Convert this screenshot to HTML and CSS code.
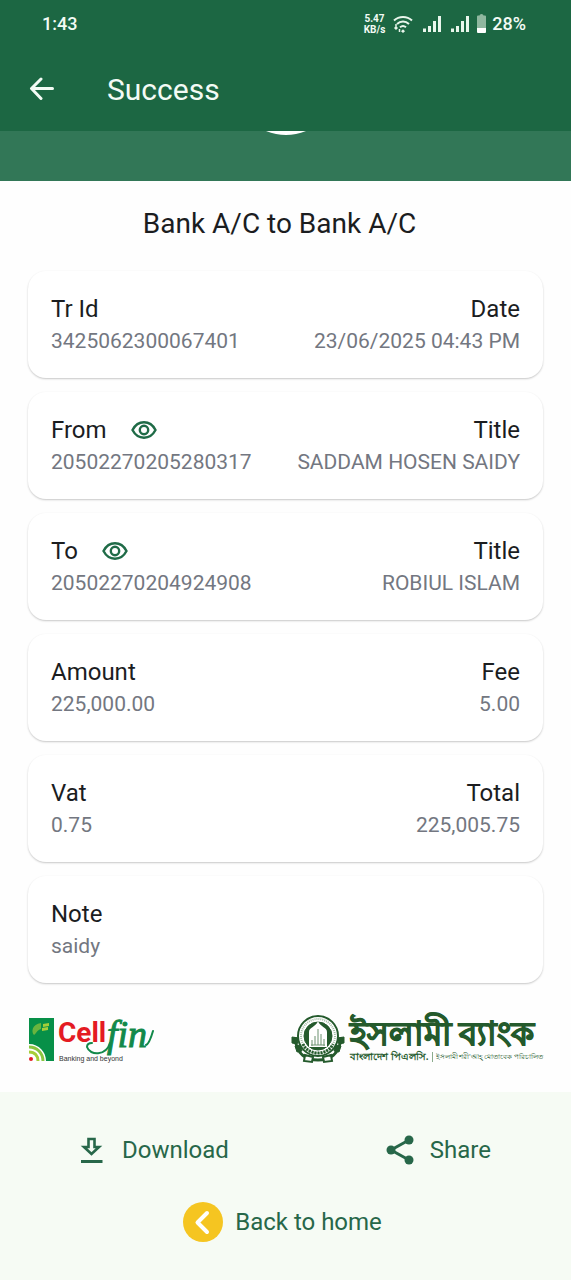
FILE: index.html
```html
<!DOCTYPE html>
<html lang="en">
<head>
  <meta charset="UTF-8">
  <meta name="viewport" content="width=device-width, initial-scale=1.0">
  <title>Success</title>
  <link rel="stylesheet" href="styles.css">
</head>
<body>
  <header class="top">
    <div class="status">
      <span class="time">1:43</span>
      <span class="speed">5.47<br>KB/s</span>
      <svg class="wifi" width="20" height="18" viewBox="0 0 20 18" fill="none" stroke="#e9f6ec" stroke-width="2">
        <path d="M1 5.500C6 .7 14 .7 19 5.500M4 9c3.500-3.200 8.500-3.200 12 0M7 12.200c1.800-1.500 4.200-1.500 6 0"/>
        <path d="M10 14.200l2 2-2 1.800-2-1.800z" fill="#e9f6ec" stroke="none"/>
        <path d="M3 9v5M1.500 12.500L3 14l1.500-1.500M6.500 17v-3" stroke-width="1.500"/>
      </svg>
      <svg class="signal" width="18" height="16" viewBox="0 0 18 16" fill="#e9f6ec">
        <path d="M0 12.500h3V16H0zM5 10h3v6H5zM10 5h3v11h-3zM15 0h3v16h-3z"/>
      </svg>
      <svg class="signal" width="18" height="16" viewBox="0 0 18 16" fill="#e9f6ec">
        <path d="M0 12.500h3V16H0zM5 10h3v6H5zM10 5h3v11h-3zM15 0h3v16h-3z"/>
      </svg>
      <svg class="battery" width="9" height="19" viewBox="0 0 9 19">
        <path d="M2.500 1.500Q2.500 0 4.500 0t2 1.500H8q1 0 1 1V14H0V2.500q0-1 1-1z" fill="#8fb79f"/>
        <path d="M0 14h9v4q0 1-1 1H1q-1 0-1-1z" fill="#fff"/>
      </svg>
      <span class="percent">28%</span>
    </div>
    <div class="appbar">
      <button class="back" aria-label="Back">
        <svg width="26" height="24" viewBox="0 0 26 24" fill="none" stroke="#f3fbf5" stroke-width="3" stroke-linecap="round" stroke-linejoin="round">
          <path d="M12 2L2.500 11.500l9.500 10M3 11.500h20.500"/>
        </svg>
      </button>
      <h1>Success</h1>
    </div>
  </header>

  <div class="band">
    <svg width="44" height="5" viewBox="0 0 44 5"><path d="M2 0h40Q22 8 2 0z" fill="#fff"/></svg>
  </div>

  <main>
    <h2>Bank A/C to Bank A/C</h2>

    <section class="card">
      <dl><dt>Tr Id</dt><dd>3425062300067401</dd></dl>
      <dl class="right"><dt>Date</dt><dd>23/06/2025 04:43 PM</dd></dl>
    </section>

    <section class="card">
      <dl>
        <dt>From
          <button class="eye" aria-label="Hide from account">
            <svg width="26" height="18" viewBox="0 0 26 18" fill="none" stroke="#1f6b47" stroke-width="2.400"><path d="M1.500 9Q5.500 1.300 13 1.300T24.500 9Q20.500 16.700 13 16.700T1.500 9z"/><circle cx="13" cy="9" r="4.200"/></svg>
          </button>
        </dt>
        <dd>20502270205280317</dd>
      </dl>
      <dl class="right"><dt>Title</dt><dd>SADDAM HOSEN SAIDY</dd></dl>
    </section>

    <section class="card">
      <dl>
        <dt>To
          <button class="eye" aria-label="Hide to account">
            <svg width="26" height="18" viewBox="0 0 26 18" fill="none" stroke="#1f6b47" stroke-width="2.400"><path d="M1.500 9Q5.500 1.300 13 1.300T24.500 9Q20.500 16.700 13 16.700T1.500 9z"/><circle cx="13" cy="9" r="4.200"/></svg>
          </button>
        </dt>
        <dd>20502270204924908</dd>
      </dl>
      <dl class="right"><dt>Title</dt><dd>ROBIUL ISLAM</dd></dl>
    </section>

    <section class="card">
      <dl><dt>Amount</dt><dd>225,000.00</dd></dl>
      <dl class="right"><dt>Fee</dt><dd>5.00</dd></dl>
    </section>

    <section class="card">
      <dl><dt>Vat</dt><dd>0.75</dd></dl>
      <dl class="right"><dt>Total</dt><dd>225,005.75</dd></dl>
    </section>

    <section class="card">
      <dl><dt>Note</dt><dd>saidy</dd></dl>
    </section>

    <div class="logos">
      <svg class="cellfin" width="126" height="50" viewBox="0 0 126 50">
        <path d="M1 4h25v43H1z" fill="#079048"/>
        <path d="M13 9c-9 1-10 9-7 12 2-1 3-5 7-6z" fill="#6ab43e"/>
        <path d="M15 10l6-1v3l-6 1zM14 14l6-1v3l-6 1z" fill="#a6ce39"/>
        <path d="M1 30c10 0 17 8 17 17H1z" fill="#fff"/>
        <g fill="none" stroke-width="3">
          <path d="M1 33c8 0 14 6 14 14" stroke="#8bc53f"/>
          <path d="M1 38c6 0 9 4 9 9" stroke="#a6ce39"/>
        </g>
        <circle cx="3" cy="45" r="2" fill="#e41b23"/>
        <text class="cell" x="30" y="28">Cell</text>
        <text class="fin" x="79" y="33">fin</text>
        <path d="M82 29C78 42 62 42 59 33q0-4 5-4M118 31c3-1 5-7 7-14" fill="none" stroke="#12894a" stroke-width="2" stroke-linecap="round"/>
        <text class="tagline" x="31" y="47">Banking and beyond</text>
      </svg>

      <div class="ibbl" lang="bn">
        <svg width="54" height="50" viewBox="0 0 54 50" fill="none" stroke="#245a2c">
          <path d="M4 23c1 18 12 23 23 23s22-5 23-23" stroke-width="3"/>
          <path d="M1 23l7 1-2 6-5-1zM53 23l-7 1 2 6 5-1zM4 32l6-1 1 6-5 1zM50 32l-6-1-1 6 5 1z" fill="#245a2c"/>
          <path d="M14 41l8 2-1 5-8-1zM40 41l-8 2 1 5 8-1z" fill="#fff" stroke-width="2"/>
          <circle cx="27" cy="22" r="20" fill="#fff" stroke-width="2"/>
          <circle cx="27" cy="22" r="17" stroke-width="2" stroke-dasharray="1 1" stroke="#a5bda6"/>
          <path d="M12 30c5 12 25 12 30 0" stroke-width="3" stroke-dasharray="2 1"/>
          <circle cx="27" cy="22" r="14" fill="#245a2c"/>
          <path d="M18 33V18c0-5 7-5 9-11 2 6 9 6 9 11v15z" fill="#fff" stroke="none"/>
          <path d="M27 15v16M24 22v9M30 20v11M21 26v6M33 25v7M20 31h14" stroke-width="1" stroke="#6d9270"/>
        </svg>
        <div class="ibbl-text">
          <span class="bank">ইসলামী ব্যাংক</span>
          <span class="sub"><b>বাংলাদেশ পিএলসি.</b><small>ইসলামী শরী'আহ্ মোতাবেক পরিচালিত</small></span>
        </div>
      </div>
    </div>
  </main>

  <footer class="actions">
    <button class="download">
      <svg width="24" height="28" viewBox="0 0 24 28" fill="none" stroke="#276749">
        <path d="M8.500 3h6v8h4.500L11.500 18 4 11h4.500z" stroke-width="2.600"/>
        <path d="M1 25.500h21.500" stroke-width="3"/>
      </svg>
      Download
    </button>
    <button class="share">
      <svg width="28" height="30" viewBox="0 0 28 30" fill="#276749">
        <path d="M23 5L5 15l18 10" fill="none" stroke="#276749" stroke-width="3"/>
        <circle cx="23" cy="5" r="4.500"/><circle cx="5" cy="15" r="4.500"/><circle cx="23" cy="25" r="4.500"/>
      </svg>
      Share
    </button>
    <a class="home" href="#">
      <svg width="40" height="40" viewBox="0 0 40 40" fill="none">
        <circle cx="20" cy="20" r="20" fill="#f5c521"/>
        <path d="M24 11l-9.500 9.500L24 30" stroke="#fff" stroke-width="4" stroke-linecap="round" stroke-linejoin="round"/>
      </svg>
      Back to home
    </a>
  </footer>
</body>
</html>
```
FILE: styles.css
```css
* {
  box-sizing: border-box;
}
body {
  margin: 0;
  min-height: 100vh;
  display: flex;
  flex-direction: column;
  font-family: Roboto, "Noto Sans", sans-serif;
  color: #1b1d1f;
  background: #fefefe;
}
h1, h2, dl, dd {
  margin: 0;
  font-weight: 400;
}
svg {
  display: block;
  flex: none;
}
button {
  padding: 0;
  border: 0;
  background: none;
  font: inherit;
  color: inherit;
  cursor: pointer;
}

.top {
  background: #1c6743;
  color: #f3fbf5;
}
.status {
  display: flex;
  align-items: center;
  height: 47px;
  padding: 0 45px 0 42px;
  font-size: 18px;
  font-weight: 500;
}
.speed {
  margin-left: auto;
  font-size: 10px;
  line-height: 11px;
  font-weight: 700;
  text-align: center;
}
.wifi {
  margin-left: 8px;
}
.signal {
  margin-left: 10px;
}
.battery {
  margin: 0 6px 0 8px;
}
.appbar {
  display: flex;
  align-items: center;
  gap: 52px;
  height: 84px;
  padding: 0 29px;
}
h1 {
  font-size: 30px;
}
.band {
  display: flex;
  justify-content: center;
  height: 50px;
  background: #327757;
}

main {
  padding: 0 28px 28px;
}
h2 {
  padding: 25px 12px 29px 0;
  font-size: 28px;
  line-height: 36px;
  text-align: center;
}
.card {
  display: flex;
  justify-content: space-between;
  margin-bottom: 14px;
  padding: 22px 23px 21px;
  border-radius: 18px;
  background: #fff;
  box-shadow: 0 1px 2px rgba(0, 0, 0, 0.22);
}
.right {
  text-align: right;
}
dt {
  display: flex;
  align-items: center;
  gap: 24px;
  font-size: 24px;
  line-height: 32px;
}
.right dt {
  justify-content: flex-end;
}
dd {
  font-size: 21px;
  line-height: 32px;
  color: #737781;
}

.logos {
  display: flex;
  justify-content: space-between;
  align-items: center;
  height: 81px;
  padding-top: 31px;
  margin-top: -14px;
}
.cell {
  font: 700 28px Roboto, sans-serif;
  fill: #e41b23;
}
.fin {
  font: italic 400 38px "Liberation Serif", serif;
  fill: #12894a;
  stroke: #12894a;
  stroke-width: 1px;
}
.tagline {
  font: 7px "Liberation Sans", sans-serif;
  fill: #333;
}
.ibbl {
  display: flex;
  align-items: center;
  gap: 5px;
  color: #245a2c;
  white-space: nowrap;
}
.bank {
  display: block;
  font-size: 33px;
  line-height: 36px;
  font-weight: 700;
  -webkit-text-stroke: 1px #245a2c;
}
.sub {
  display: flex;
  align-items: center;
  gap: 3px;
  font-size: 10px;
  line-height: 10px;
}
.sub small {
  padding-left: 3px;
  border-left: 1px solid #8aab8c;
  font-size: 7px;
}

.actions {
  flex: 1;
  display: grid;
  grid-template-columns: auto auto;
  justify-content: space-between;
  align-content: start;
  gap: 32px 0;
  padding: 38px 80px 36px;
  background: #f6fbf4;
  color: #276749;
  font-size: 24px;
}
.actions button {
  display: flex;
  align-items: center;
  height: 40px;
}
.download {
  gap: 18px;
}
.share {
  gap: 16px;
}
.home {
  grid-column: 1 / -1;
  display: flex;
  align-items: center;
  justify-content: center;
  gap: 12px;
  padding-right: 6px;
  color: inherit;
  text-decoration: none;
}
```
